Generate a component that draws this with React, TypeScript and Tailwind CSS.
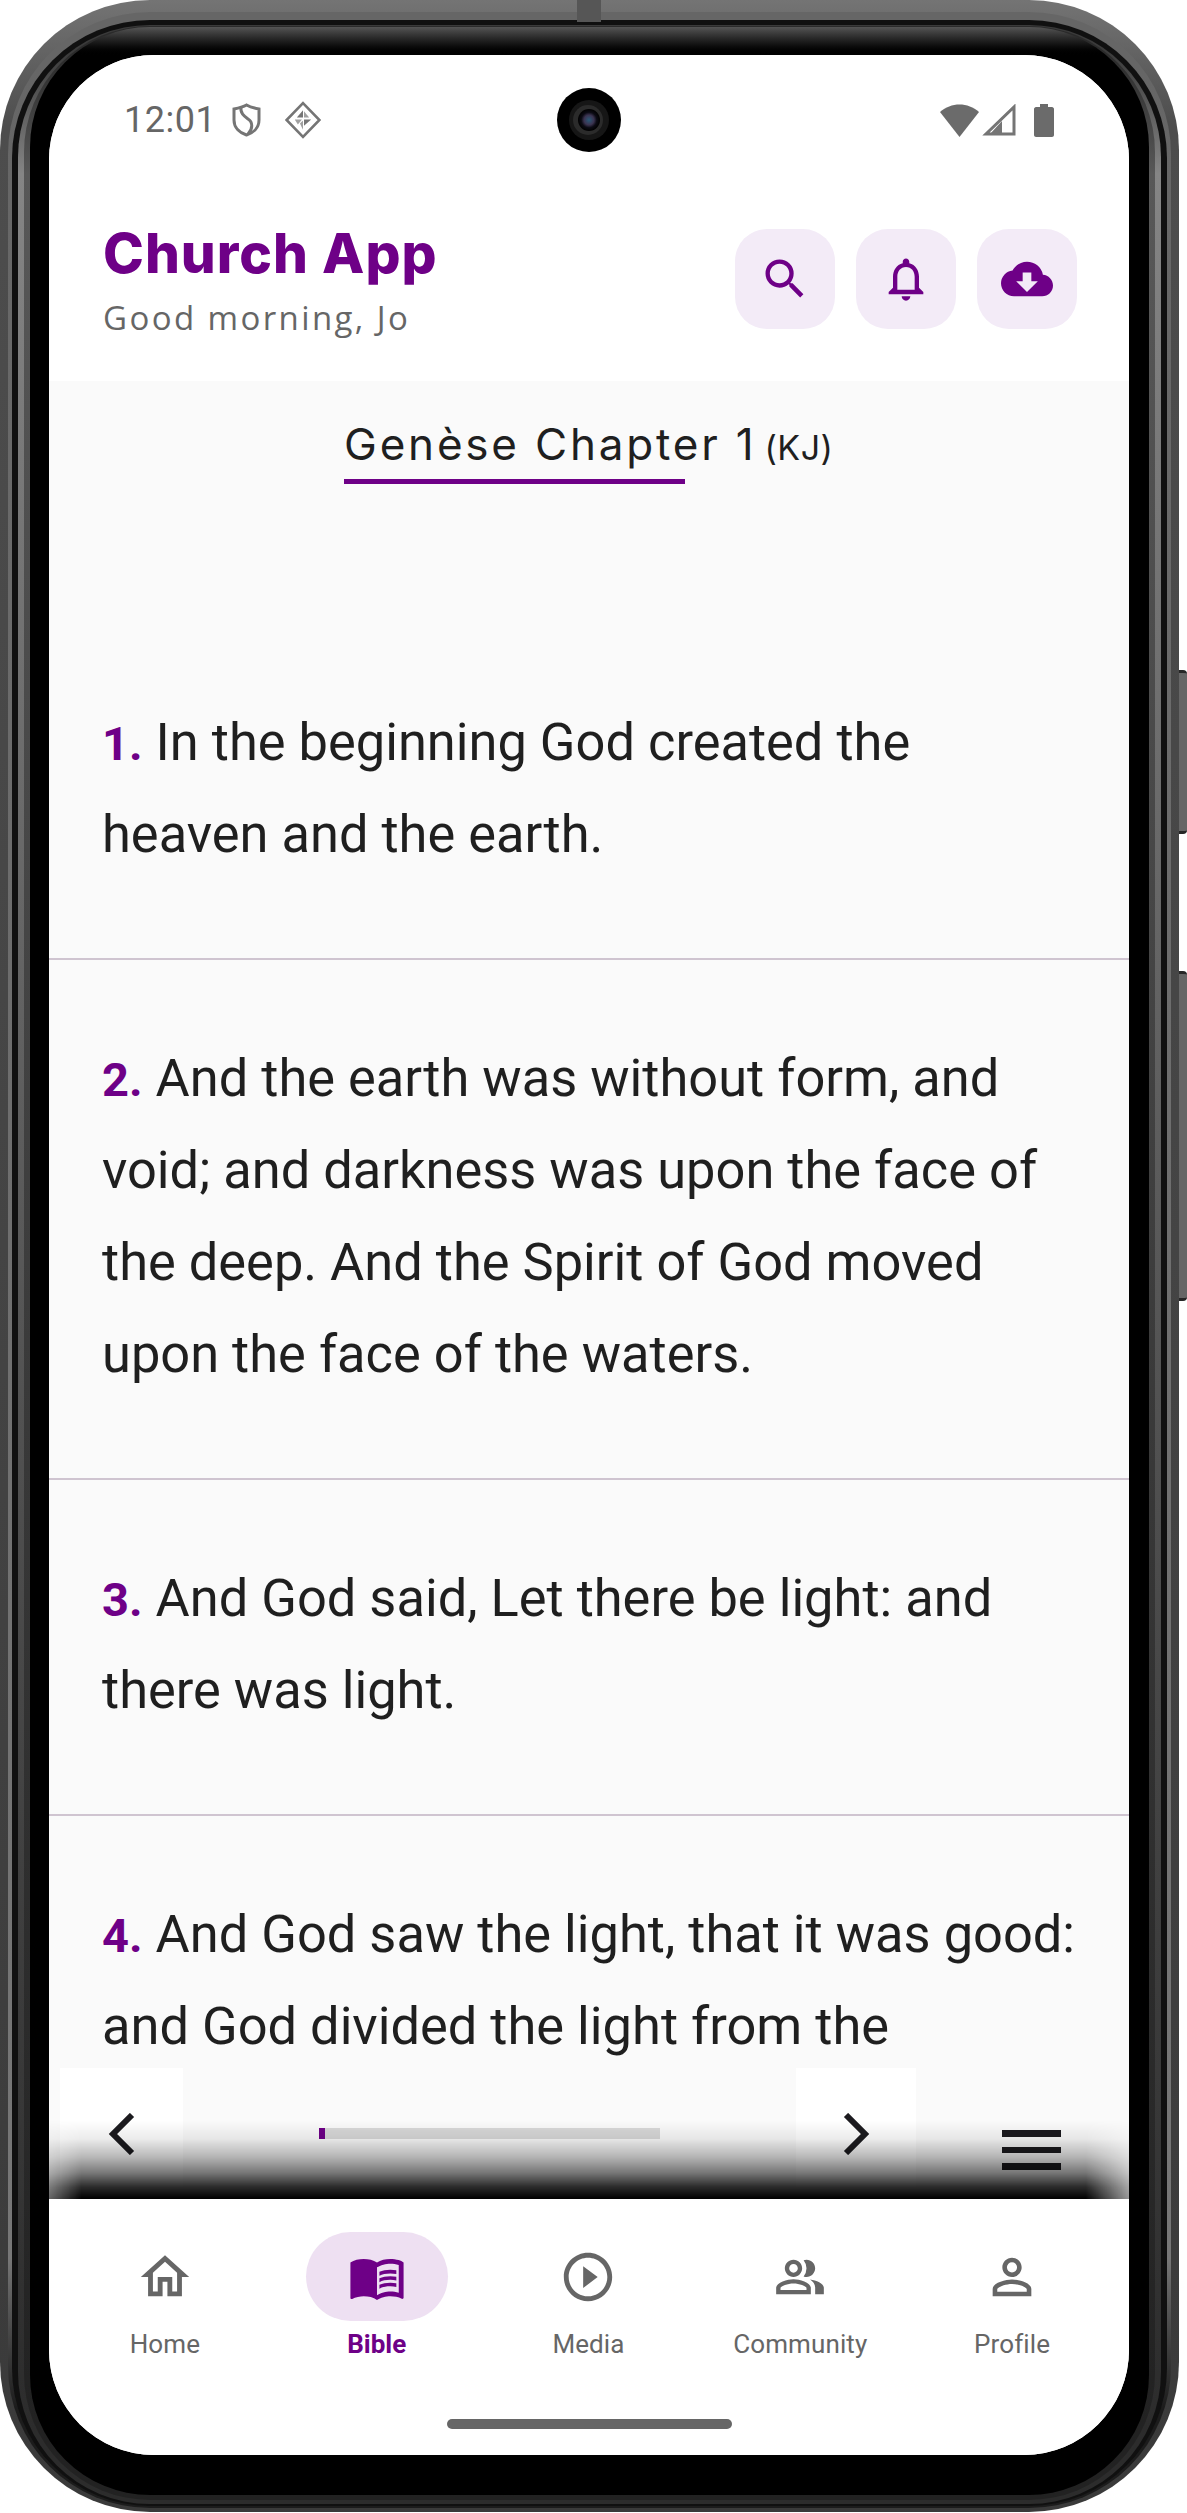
import {
  MdCloudDownload,
  MdMenuBook,
  MdOutlineHome,
  MdOutlineNotificationsNone,
  MdOutlinePeopleAlt,
  MdPersonOutline,
  MdPlayCircleOutline,
  MdSearch,
} from "react-icons/md";

const verses = [
  { n: "1.", text: "In the beginning God created the heaven and the earth." },
  {
    n: "2.",
    text: "And the earth was without form, and void; and darkness was upon the face of the deep. And the Spirit of God moved upon the face of the waters.",
  },
  { n: "3.", text: "And God said, Let there be light: and there was light." },
  {
    n: "4.",
    text: "And God saw the light, that it was good: and God divided the light from the darkness.",
  },
];

const tabs = [
  { label: "Home", icon: MdOutlineHome, size: 58 },
  { label: "Bible", icon: MdMenuBook, size: 58, active: true },
  { label: "Media", icon: MdPlayCircleOutline, size: 58 },
  { label: "Community", icon: MdOutlinePeopleAlt, size: 52 },
  { label: "Profile", icon: MdPersonOutline, size: 58 },
];

const headerButtons = [MdSearch, MdOutlineNotificationsNone, MdCloudDownload];

const StatusBar = () => (
  <div className="grid grid-cols-[1fr_64px_1fr] h-[64px] mt-[33px] items-center font-['Roboto',sans-serif] text-[#666666]">
    <div className="flex items-center pl-[75px]">
      <span className="text-[36px] tracking-[0.5px] leading-none">12:01</span>
      <svg className="ml-[16px] w-[29px] h-[34px]" viewBox="0 0 29 34" fill="none" stroke="#757575" strokeWidth="3">
        <path d="M2 6C7 5 11 4 14.5 2C18 4 22 5 27 6V17C27 25 21 30 14.5 32C8 30 2 25 2 17Z" />
        <path d="M9 4C8 10 12 13 16 16C21 19 21 26 16 31" />
      </svg>
      <svg className="ml-[23px] w-[38px] h-[38px]" viewBox="0 0 36 37" fill="#757575">
        <polygon points="18,2 34,18.5 18,35 2,18.5" fill="none" stroke="#757575" strokeWidth="2.5" />
        <polygon points="18,9 18,16 12,16" />
        <polygon points="19,10 24,16 19,16" fill="#a0a0a0" />
        <polygon points="10,18 17,18 13,23" fill="#a0a0a0" />
        <polygon points="19,18 26,18 19,24" />
        <polygon points="15,22 18,28 18,19" fill="#a0a0a0" />
      </svg>
    </div>
    <svg className="w-[64px] h-[64px]" viewBox="0 0 64 64">
      <defs>
        <radialGradient id="lens" cx="0.5" cy="0.5" r="0.5">
          <stop offset="0%" stopColor="#2a5a78" />
          <stop offset="45%" stopColor="#3b3350" />
          <stop offset="70%" stopColor="#0b0b14" />
          <stop offset="100%" stopColor="#000000" />
        </radialGradient>
      </defs>
      <circle cx="32" cy="32" r="32" fill="#000000" />
      <circle cx="32" cy="32" r="20" fill="#161616" />
      <circle cx="31" cy="32" r="15" fill="#2b2b2b" />
      <circle cx="32" cy="32" r="11" fill="url(#lens)" />
    </svg>
    <div className="flex items-center justify-end pr-[75px]">
      <svg className="w-[39px] h-[33px]" viewBox="0 0 39 33" fill="#6b6b6b">
        <path d="M0 8C11 -2 28 -2 39 8L19.5 33Z" />
      </svg>
      <svg className="ml-[3px] w-[34px] h-[32px]" viewBox="0 0 34 32" fill="none" stroke="#757575" strokeWidth="3">
        <polygon points="32,3 32,30 4,30" />
        <polygon points="20,17 20,30 8,30" fill="#757575" stroke="none" />
      </svg>
      <svg className="ml-[18px] w-[20px] h-[33px]" viewBox="0 0 20 33" fill="#6b6b6b">
        <path d="M6 0H14V3H18C19 3 20 4 20 5V31C20 32 19 33 18 33H2C1 33 0 32 0 31V5C0 4 1 3 2 3H6Z" />
      </svg>
    </div>
  </div>
);

const App = () => {
  return (
    <div className="w-[1187px] h-[2513px] bg-white flex overflow-hidden">
      {/* device frame */}
      <div className="relative w-[1179px] h-[2512px] rounded-[150px] bg-gradient-to-b from-[#747474] from-0% via-[#4d4d4d] via-[5%] to-[#3a3a3a] px-[8px] pt-[12px] pb-[4px]">
        <div className="absolute top-0 left-[577px] w-[24px] h-[22px] bg-[#565656]" />
        <div className="rounded-[142px] bg-gradient-to-b from-[#666666] from-2% via-[#777777] via-90% to-[#1c1c1c] to-96% px-[4px] pt-[8px] pb-[2px]">
          <div className="rounded-[138px] bg-[#101010] px-[6px] pt-[5px] pb-[2px]">
            <div className="rounded-[132px] bg-gradient-to-b from-[#3a3a3a] from-1% via-[#858585] via-6% to-[#2c2c2c] to-97% pl-[6px] pr-[6px] pt-[1px] pb-[4px]">
              <div className="rounded-[126px] bg-gradient-to-b from-[#2a2a2a] from-1% via-[#585858] via-6% to-[#222222] to-97% px-[6px] pt-[1px] pb-[5px]">
                <div className="rounded-[120px] bg-gradient-to-b from-[#555555] from-0% via-[#000000] via-[1.2%] to-[#000000] pl-[19px] pr-[20px] pt-[28px] pb-[40px]">
                  {/* screen */}
                  <div className="relative h-[2400px] rounded-[105px] overflow-hidden bg-white flex flex-col">
                    <header className="h-[326px] shrink-0 bg-white">
                      <StatusBar />
                      <div className="mt-[77px] pl-[54px] pr-[52px] flex justify-between">
                        <div className="flex flex-col">
                          <span className="font-['Inter',sans-serif] font-extrabold text-[55px] tracking-[1px] leading-[56px] mt-[-4px] text-[#6e0087]">
                            Church App
                          </span>
                          <span className="font-['Open_Sans',sans-serif] text-[33px] leading-[40px] mt-[17px] tracking-[2.4px] text-[#666666]">
                            Good morning, Jo
                          </span>
                        </div>
                        <div className="flex gap-[21px]">
                          {headerButtons.map((Icon, i) => (
                            <div key={i} className="w-[100px] h-[100px] rounded-[32px] bg-[#f3ebf7] flex items-center justify-center text-[#6e0087]">
                              <Icon size={52} />
                            </div>
                          ))}
                        </div>
                      </div>
                    </header>

                    <main className="relative flex-1 overflow-hidden bg-[#fafafa]">
                      <div className="h-[243px] pl-[295px] pt-[36px]">
                        <div className="flex items-baseline font-['Inter',sans-serif] text-[#1f1f1f] leading-[54px]">
                          <span className="text-[44px] tracking-[2.8px]">Genèse Chapter 1</span>
                          <span className="ml-[8px] text-[34px] tracking-[0.5px]">(KJ)</span>
                        </div>
                        <div className="w-[341px] h-[5px] bg-[#6e0087] mt-[4px]" />
                      </div>
                      {verses.map((v) => (
                        <div key={v.n} className="pl-[53px] pr-[50px] pt-[72px] pb-[78px] border-b-2 border-[#cfc4d0] font-['Roboto',sans-serif] text-[52.4px] leading-[92px] text-[#1f1f1f]">
                          <span className="text-[47px] leading-none font-bold text-[#6e0087]">{v.n}</span> {v.text}
                        </div>
                      ))}

                      {/* reader controls */}
                      <div className="absolute left-0 right-0 bottom-0 h-[131px] bg-[#fafafa] flex">
                        <div className="ml-[11px] w-[123px] h-full bg-white flex justify-center pt-[45px]">
                          <svg className="w-[28px] h-[42px]" viewBox="0 0 28 42" fill="none" stroke="#1c1b1f" strokeWidth="6">
                            <polyline points="24,2 5,21 24,40" />
                          </svg>
                        </div>
                        <div className="ml-[136px] mt-[60px] w-[341px] h-[11px] bg-[#d9d9d9]">
                          <div className="w-[6px] h-full bg-[#6e0087]" />
                        </div>
                        <div className="ml-[136px] w-[120px] h-full bg-white flex justify-center pt-[45px]">
                          <svg className="w-[28px] h-[42px]" viewBox="0 0 28 42" fill="none" stroke="#1c1b1f" strokeWidth="6">
                            <polyline points="4,2 23,21 4,40" />
                          </svg>
                        </div>
                        <div className="ml-[86px] mt-[62px] w-[59px] flex flex-col gap-[10px]">
                          <div className="h-[6.5px] bg-[#1c1b1f]" />
                          <div className="h-[6.5px] bg-[#1c1b1f]" />
                          <div className="h-[6.5px] bg-[#1c1b1f]" />
                        </div>
                      </div>

                      {/* nav shadow falling on the controls */}
                      <div className="absolute left-0 right-0 bottom-0 h-[92px] bg-[linear-gradient(to_top,rgba(0,0,0,1)_0px,rgba(0,0,0,0.83)_12px,rgba(0,0,0,0.53)_26px,rgba(0,0,0,0.28)_42px,rgba(0,0,0,0.08)_60px,rgba(0,0,0,0)_78px)] [mask-image:linear-gradient(to_right,rgba(0,0,0,0.6),#000000_3%,#000000_96%,rgba(0,0,0,0.4))]" />
                    </main>

                    <nav className="relative z-10 h-[256px] shrink-0 bg-white pl-[10px] pr-[11px] pt-[33px] flex">
                      {tabs.map(({ label, icon: Icon, size, active }) => (
                        <div key={label} className="flex-1 flex flex-col items-center font-['Roboto',sans-serif]">
                          <div className={active ? "w-[142px] h-[89px] rounded-full bg-[#eee0f2] flex items-center justify-center text-[#6e0087]" : "w-[142px] h-[89px] flex items-center justify-center text-[#666666]"}>
                            <Icon size={size} />
                          </div>
                          <span className={active ? "mt-[8px] text-[26px] leading-[30px] font-bold text-[#6e0087]" : "mt-[8px] text-[26px] tracking-[0.1px] leading-[30px] text-[#666666]"}>
                            {label}
                          </span>
                        </div>
                      ))}
                      <div className="absolute left-[398px] bottom-[26px] w-[285px] h-[10px] rounded-full bg-[#666666]" />
                    </nav>
                  </div>
                </div>
              </div>
            </div>
          </div>
        </div>
      </div>

      {/* side buttons */}
      <div className="w-[8px] pt-[670px] flex flex-col">
        <div className="h-[164px] rounded-r-[4px] bg-[#666666] border-y-[3px] border-[#262626]" />
        <div className="mt-[137px] h-[330px] rounded-r-[4px] bg-[#666666] border-y-[3px] border-[#262626]" />
      </div>
    </div>
  );
};

export default App;
